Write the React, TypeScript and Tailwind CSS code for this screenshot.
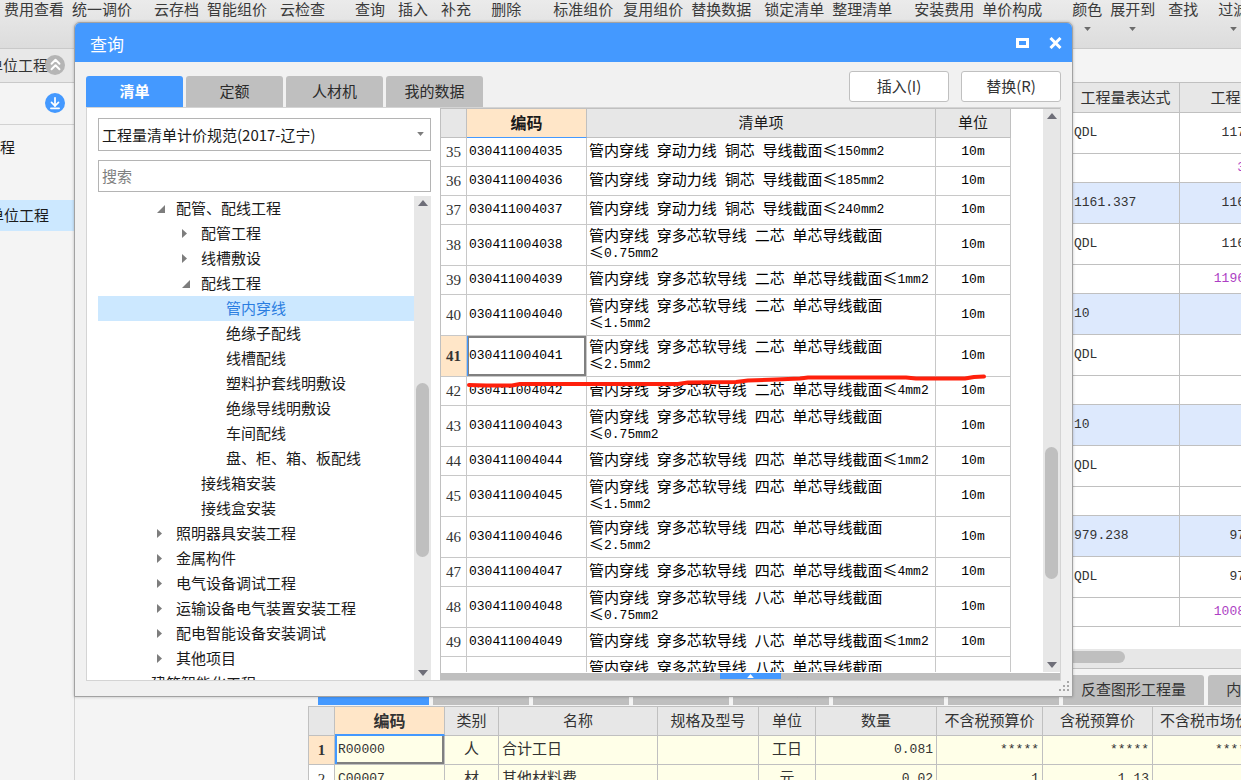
import { ChevronsUp, ArrowDownToLine } from "lucide-react";

type ToolItem = { label: string; gap: string; menu?: boolean };

type TreeNode = {
  label: string;
  level: 0 | 1 | 2 | 3;
  state?: "open" | "closed";
  active?: boolean;
};

type ListRow = { no?: number; name: string };

type QtyRow = { expr: string; qty: string; tone?: "blue" | "purple"; short?: boolean };

const TOOLBAR: ToolItem[] = [
  { label: "费用查看", gap: "ml-1" },
  { label: "统一调价", gap: "ml-2" },
  { label: "云存档", gap: "ml-[22px]" },
  { label: "智能组价", gap: "ml-2" },
  { label: "云检查", gap: "ml-[13px]" },
  { label: "查询", gap: "ml-[30px]" },
  { label: "插入", gap: "ml-[13px]" },
  { label: "补充", gap: "ml-[13px]" },
  { label: "删除", gap: "ml-[20px]" },
  { label: "标准组价", gap: "ml-[32px]" },
  { label: "复用组价", gap: "ml-[10px]" },
  { label: "替换数据", gap: "ml-2" },
  { label: "锁定清单", gap: "ml-[13px]" },
  { label: "整理清单", gap: "ml-2" },
  { label: "安装费用", gap: "ml-[22px]" },
  { label: "单价构成", gap: "ml-2" },
  { label: "颜色", gap: "ml-[30px]", menu: true },
  { label: "展开到", gap: "ml-2", menu: true },
  { label: "查找", gap: "ml-[13px]" },
  { label: "过滤", gap: "ml-[20px]", menu: true },
];

const DIALOG_TABS = ["清单", "定额", "人材机", "我的数据"];

const TREE: TreeNode[] = [
  { label: "配管、配线工程", level: 1, state: "open" },
  { label: "配管工程", level: 2, state: "closed" },
  { label: "线槽敷设", level: 2, state: "closed" },
  { label: "配线工程", level: 2, state: "open" },
  { label: "管内穿线", level: 3, active: true },
  { label: "绝缘子配线", level: 3 },
  { label: "线槽配线", level: 3 },
  { label: "塑料护套线明敷设", level: 3 },
  { label: "绝缘导线明敷设", level: 3 },
  { label: "车间配线", level: 3 },
  { label: "盘、柜、箱、板配线", level: 3 },
  { label: "接线箱安装", level: 2 },
  { label: "接线盒安装", level: 2 },
  { label: "照明器具安装工程", level: 1, state: "closed" },
  { label: "金属构件", level: 1, state: "closed" },
  { label: "电气设备调试工程", level: 1, state: "closed" },
  { label: "运输设备电气装置安装工程", level: 1, state: "closed" },
  { label: "配电智能设备安装调试", level: 1, state: "closed" },
  { label: "其他项目", level: 1, state: "closed" },
  { label: "建筑智能化工程", level: 0 },
];

const INDENT = ["pl-[28px]", "pl-[53px]", "pl-[78px]", "pl-[103px]"];

const LIST: ListRow[] = [
  { no: 35, name: "管内穿线 穿动力线 铜芯 导线截面≤150mm2" },
  { no: 36, name: "管内穿线 穿动力线 铜芯 导线截面≤185mm2" },
  { no: 37, name: "管内穿线 穿动力线 铜芯 导线截面≤240mm2" },
  { no: 38, name: "管内穿线 穿多芯软导线 二芯 单芯导线截面\n≤0.75mm2" },
  { no: 39, name: "管内穿线 穿多芯软导线 二芯 单芯导线截面≤1mm2" },
  { no: 40, name: "管内穿线 穿多芯软导线 二芯 单芯导线截面\n≤1.5mm2" },
  { no: 41, name: "管内穿线 穿多芯软导线 二芯 单芯导线截面\n≤2.5mm2" },
  { no: 42, name: "管内穿线 穿多芯软导线 二芯 单芯导线截面≤4mm2" },
  { no: 43, name: "管内穿线 穿多芯软导线 四芯 单芯导线截面\n≤0.75mm2" },
  { no: 44, name: "管内穿线 穿多芯软导线 四芯 单芯导线截面≤1mm2" },
  { no: 45, name: "管内穿线 穿多芯软导线 四芯 单芯导线截面\n≤1.5mm2" },
  { no: 46, name: "管内穿线 穿多芯软导线 四芯 单芯导线截面\n≤2.5mm2" },
  { no: 47, name: "管内穿线 穿多芯软导线 四芯 单芯导线截面≤4mm2" },
  { no: 48, name: "管内穿线 穿多芯软导线 八芯 单芯导线截面\n≤0.75mm2" },
  { no: 49, name: "管内穿线 穿多芯软导线 八芯 单芯导线截面≤1mm2" },
  { name: "管内穿线 穿多芯软导线 八芯 单芯导线截面\n≤1.5mm2" },
];

const QTY: QtyRow[] = [
  { expr: "QDL", qty: "1173.337" },
  { expr: "", qty: "351.25", tone: "purple", short: true },
  { expr: "1161.337", qty: "1161.337", tone: "blue" },
  { expr: "QDL", qty: "1161.337" },
  { expr: "", qty: "1196.1771", tone: "purple", short: true },
  { expr: "10", qty: "", tone: "blue" },
  { expr: "QDL", qty: "" },
  { expr: "", qty: "", short: true },
  { expr: "10", qty: "", tone: "blue" },
  { expr: "QDL", qty: "" },
  { expr: "", qty: "", short: true },
  { expr: "979.238", qty: "979.238", tone: "blue" },
  { expr: "QDL", qty: "979.238" },
  { expr: "", qty: "1008.6151", tone: "purple", short: true },
];

const DETAIL_TABS = [
  "工料机显示",
  "单价构成",
  "标准换算",
  "换算信息",
  "安装费用",
  "特征及内容",
  "工程量明细",
  "反查图形工程量",
  "内容指引",
];

const DETAIL_ROWS = [
  ["R00000", "人", "合计工日", "", "工日", "0.081", "*****", "*****", "*****"],
  ["C00007", "材", "其他材料费", "", "元", "0.02", "1", "1.13", "1"],
];

const DETAIL_HEADS = ["编码", "类别", "名称", "规格及型号", "单位", "数量", "不含税预算价", "含税预算价", "不含税市场价"];

// Latin runs are set in the smaller mono face, Chinese runs keep the 15px face.
function Mixed({ text }: { text: string }) {
  return (
    <>
      {text.split(/([\x20-\x7e]+)/).map((part, i) =>
        i % 2 ? (
          <span key={i} className="align-[1px] font-['Liberation_Mono',monospace] text-[13px] leading-none whitespace-pre">
            {part}
          </span>
        ) : (
          part
        )
      )}
    </>
  );
}

function Triangle({ dir, className }: { dir: "up" | "down"; className: string }) {
  return (
    <svg viewBox="0 0 10 6" className={className} aria-hidden="true">
      <path d={dir === "up" ? "M5 0L10 6H0Z" : "M5 6L0 0H10Z"} fill="currentColor" />
    </svg>
  );
}

function TreeMarker({ state }: { state?: "open" | "closed" }) {
  return (
    <span className="flex w-[25px] shrink-0 items-center pl-[6px] text-[#7d7d7d]">
      {state === "open" && (
        <svg viewBox="0 0 8 8" className="size-2" aria-hidden="true">
          <path d="M8 0V8H0Z" fill="currentColor" />
        </svg>
      )}
      {state === "closed" && (
        <svg viewBox="0 0 5 9" className="h-[9px] w-[5px]" aria-hidden="true">
          <path d="M0 0L5 4.5L0 9Z" fill="currentColor" />
        </svg>
      )}
    </span>
  );
}

function ScrollBar({ before, thumb }: { before: string; thumb: string }) {
  return (
    <div className="flex w-[17px] shrink-0 flex-col items-center bg-[#e7e7e7] py-1 text-[#6e6e78]">
      <Triangle dir="up" className="h-[6px] w-[10px] shrink-0" />
      <div className={before} />
      <div className={`w-[13px] shrink-0 rounded-full bg-[#bfbfbf] ${thumb}`} />
      <div className="flex-1" />
      <Triangle dir="down" className="h-[6px] w-[10px] shrink-0" />
    </div>
  );
}

function Toolbar() {
  return (
    <nav className="flex h-[49px] shrink-0 border-b border-[#c9c9c9] bg-gradient-to-b from-[#ebebeb] to-[#dcdcdc]">
      {TOOLBAR.map((t) => (
        <button key={t.label} className={`flex shrink-0 flex-col items-center text-[#3a3a3a] ${t.gap}`}>
          <span className="leading-[18px]">{t.label}</span>
          {t.menu && <Triangle dir="down" className="mt-[9px] h-1 w-[7px] text-[#6b6b6b]" />}
        </button>
      ))}
    </nav>
  );
}

function Sidebar() {
  return (
    <aside className="flex w-[75px] shrink-0 flex-col border-r border-[#d2d2d2] bg-[#f4f4f4]">
      <div className="flex h-[34px] items-center justify-end border-b border-[#c9c9c9] bg-[#e8e8e8] pr-[9px] pb-[2px]">
        <span className="shrink-0 text-[#333]">单位工程</span>
        <button aria-label="收起" className="-ml-[3px] flex size-5 shrink-0 items-center justify-center rounded-full bg-[#b5b5b5] text-white">
          <ChevronsUp size={19} strokeWidth={2.5} />
        </button>
      </div>
      <div className="flex h-[42px] items-center justify-end border-b border-[#d2d2d2] pr-[9px] pb-[2px]">
        <button aria-label="下载" className="flex size-5 items-center justify-center rounded-full bg-[#4499ff] text-white">
          <ArrowDownToLine size={14} strokeWidth={3} />
        </button>
      </div>
      <div className="flex h-[45px] items-center pb-[2px]">程</div>
      <div className="h-[30px]" />
      <div className="flex h-[31px] items-center justify-end bg-[#cce8ff] pr-[25px] pb-[2px]">
        <span className="shrink-0">单位工程</span>
      </div>
    </aside>
  );
}

function QuantityTable() {
  return (
    <div className="overflow-hidden">
      <table className="w-[979px] table-fixed border-separate border-spacing-0">
        <colgroup>
          <col />
          <col className="w-[108px]" />
          <col className="w-[107px]" />
        </colgroup>
        <thead>
          <tr className="h-[30px] bg-[#e7e7e7] text-[#333]">
            <th className="border-r border-b border-[#c0c0c0]" />
            <th className="border-r border-b border-[#c0c0c0] pb-[2px] font-normal">工程量表达式</th>
            <th className="border-r border-b border-[#c0c0c0] pb-[2px] font-normal">工程量</th>
          </tr>
        </thead>
        <tbody className="text-[#333]">
          {QTY.map((r, i) => (
            <tr key={i} className={`${r.short ? "h-[29px]" : "h-[41px]"} ${r.tone === "blue" ? "bg-[#dde9fd]" : "bg-white"}`}>
              <td className="border-r border-b border-[#c0c0c0]" />
              <td className="border-r border-b border-[#c0c0c0] pb-1 pl-[2px]">
                <Mixed text={r.expr} />
              </td>
              <td className={`border-r border-b border-[#c0c0c0] pr-[2px] pb-1 text-right ${r.tone === "purple" ? "text-[#ad3fc4]" : ""}`}>
                <Mixed text={r.qty} />
              </td>
            </tr>
          ))}
        </tbody>
      </table>
    </div>
  );
}

function DetailPanel() {
  return (
    <section className="flex h-[112px] shrink-0 flex-col overflow-hidden border-t border-[#c0c0c0] bg-[#f4f4f4]">
      <div className="flex gap-1 pt-[6px] pl-[10px]">
        {DETAIL_TABS.map((t, i) => (
          <button
            key={t}
            className={`h-[30px] shrink-0 rounded-t-[3px] px-[18px] pb-[2px] ${
              i === 0 ? "bg-[#4499ff] text-white" : "bg-[#bfbfbf] text-[#333]"
            }`}
          >
            {t}
          </button>
        ))}
      </div>
      <table className="mt-px w-[950px] table-fixed border-separate border-spacing-0 border-t border-l border-[#c0c0c0]">
        <colgroup>
          <col className="w-[26px]" />
          <col className="w-[110px]" />
          <col className="w-[54px]" />
          <col className="w-[159px]" />
          <col className="w-[101px]" />
          <col className="w-[57px]" />
          <col className="w-[121px]" />
          <col className="w-[106px]" />
          <col className="w-[110px]" />
          <col className="w-[105px]" />
        </colgroup>
        <thead>
          <tr className="h-[29px] bg-[#e7e7e7] text-[#333]">
            <th className="border-r border-b border-[#c0c0c0]" />
            {DETAIL_HEADS.map((h, i) => (
              <th
                key={h}
                className={`border-r pb-[2px] whitespace-nowrap ${
                  i === 0
                    ? "border-b-2 border-r-[#c0c0c0] border-b-[#4499ff] bg-[#ffe6c8] text-base leading-5 font-bold"
                    : "border-b border-[#c0c0c0] font-normal"
                }`}
              >
                {h}
              </th>
            ))}
          </tr>
        </thead>
        <tbody className="text-[#333]">
          {DETAIL_ROWS.map((row, r) => (
            <tr key={row[0]} className="h-[29px] bg-[#ffffe8]">
              <th
                className={`border-r border-b border-[#c0c0c0] font-['Liberation_Serif',serif] ${
                  r === 0 ? "bg-[#ffe6c8] font-bold" : "bg-white font-normal"
                }`}
              >
                {r + 1}
              </th>
              {row.map((v, i) => (
                <td
                  key={i}
                  className={`border-r border-b border-[#c0c0c0] px-[3px] pb-1 ${
                    i > 4 ? "text-right" : i === 1 || i === 4 ? "text-center" : ""
                  } ${r === 0 && i === 0 ? "shadow-[inset_2px_0_0_#4499ff,inset_-2px_-2px_0_#808080]" : ""}`}
                >
                  <Mixed text={v} />
                </td>
              ))}
            </tr>
          ))}
        </tbody>
      </table>
    </section>
  );
}

function TreePane() {
  return (
    <div className="flex w-[353px] shrink-0 flex-col bg-white pt-[10px] pr-[9px] pl-[11px]">
      <div className="relative">
        <select
          aria-label="清单规范"
          className="h-[33px] w-full appearance-none rounded-none border border-[#b4b4b4] bg-white pl-[3px] text-[#1a1a1a] outline-none"
        >
          <option>工程量清单计价规范(2017-辽宁)</option>
        </select>
        <Triangle dir="down" className="pointer-events-none absolute top-[14px] right-[7px] h-1 w-[7px] text-[#7d7d7d]" />
      </div>
      <input
        aria-label="搜索"
        placeholder="搜索"
        className="mt-[9px] h-8 w-full border border-[#b4b4b4] bg-white pb-[2px] pl-[3px] outline-none placeholder:text-[#808080]"
      />
      <div className="mt-1 flex min-h-0 flex-1">
        <ul className="min-w-0 flex-1 overflow-hidden">
          {TREE.map((n) => (
            <li
              key={n.label}
              className={`flex h-[25px] items-center ${INDENT[n.level]} ${n.active ? "bg-[#cce8ff] text-[#2a7de1]" : "text-[#1a1a1a]"}`}
            >
              <TreeMarker state={n.state} />
              <span className="pb-[2px] whitespace-nowrap">{n.label}</span>
            </li>
          ))}
        </ul>
        <ScrollBar before="h-[177px] shrink-0" thumb="h-[174px]" />
      </div>
    </div>
  );
}

function ListPane() {
  return (
    <div className="flex min-w-0 flex-1 flex-col border-t border-l border-[#c0c0c0] bg-white">
      <div className="flex min-h-0 flex-1">
        <div className="mr-8 min-w-0 flex-1 overflow-hidden">
          <table className="w-full table-fixed border-separate border-spacing-0">
            <colgroup>
              <col className="w-[26px]" />
              <col className="w-[120px]" />
              <col />
              <col className="w-[75px]" />
            </colgroup>
            <thead>
              <tr className="h-[29px] bg-[#e7e7e7] text-[#1a1a1a]">
                <th className="border-r border-b border-[#c0c0c0]" />
                <th className="border-r border-b border-r-[#c0c0c0] border-b-[#4499ff] bg-[#ffe6c8] pb-[2px] text-base leading-5 font-bold">
                  编码
                </th>
                <th className="border-r border-b border-[#c0c0c0] pb-[2px] font-normal">清单项</th>
                <th className="border-r border-b border-[#c0c0c0] pb-[2px] font-normal">单位</th>
              </tr>
            </thead>
            <tbody className="text-black">
              {LIST.map((r, i) => {
                const active = r.no === 41;
                return (
                  <tr key={i} className={`leading-[17px] ${r.name.includes("\n") ? "h-[41px]" : "h-[29px]"}`}>
                    <th
                      className={`border-r border-b border-[#c8c8c8] font-['Liberation_Serif',serif] text-[#333] ${
                        active ? "bg-[#ffe6c8] font-bold" : "font-normal"
                      }`}
                    >
                      {r.no}
                    </th>
                    <td
                      className={`border-r border-b border-[#c8c8c8] pb-[5px] pl-[2px] ${
                        active ? "shadow-[inset_1px_0_0_#4499ff,inset_0_0_0_2px_#808080]" : ""
                      }`}
                    >
                      {r.no && <Mixed text={`0304110040${r.no}`} />}
                    </td>
                    <td className="border-r border-b border-[#c8c8c8] pb-[5px] pl-[2px] whitespace-pre">
                      <Mixed text={r.name} />
                    </td>
                    <td className="border-r border-b border-[#c8c8c8] pb-[5px] text-center">{r.no && <Mixed text="10m" />}</td>
                  </tr>
                );
              })}
            </tbody>
          </table>
        </div>
        <ScrollBar before="h-[328px] shrink-0" thumb="h-[132px]" />
      </div>
      <div className="mt-px flex h-[7px] shrink-0 justify-center bg-[#bfbfbf]">
        <button aria-label="展开" className="flex h-[6px] w-[61px] items-center justify-center bg-[#4499ff] text-white">
          <Triangle dir="up" className="h-1 w-[7px]" />
        </button>
      </div>
    </div>
  );
}

function QueryDialog() {
  return (
    <div
      role="dialog"
      aria-label="查询"
      className="absolute top-[22px] right-[168px] bottom-[83px] left-[74px] flex flex-col rounded-t-md border border-[#a2a2a2] bg-[#f1f1f1] shadow-[0_0_3px_rgba(0,0,0,0.25)]"
    >
      <header className="flex h-[39px] shrink-0 items-center rounded-t-[5px] bg-[#4499ff] pr-[10px] pl-[15px] text-white">
        <h1 className="mt-[2px] flex-1 text-[17px]">查询</h1>
        <button aria-label="最大化">
          <svg viewBox="0 0 13 10" className="h-[10px] w-[13px]" fill="none" stroke="currentColor" strokeWidth="3">
            <path d="M1.5 1.5H11.5V8.5H1.5Z" />
          </svg>
        </button>
        <button aria-label="关闭" className="ml-5">
          <svg viewBox="0 0 13 12" className="h-3 w-[13px]" fill="none" stroke="currentColor" strokeWidth="3">
            <path d="M1.5 1L11.5 11M11.5 1L1.5 11" />
          </svg>
        </button>
      </header>

      <div className="flex h-[45px] shrink-0 px-[11px]">
        <div role="tablist" className="flex flex-1 items-end gap-[3px]">
          {DIALOG_TABS.map((t, i) => (
            <button
              key={t}
              role="tab"
              aria-selected={i === 0}
              className={`h-[31px] w-[97px] rounded-t-[3px] pb-[2px] ${
                i === 0 ? "bg-[#4499ff] font-bold text-white" : "bg-[#bfbfbf] text-[#2b2b2b]"
              }`}
            >
              {t}
            </button>
          ))}
        </div>
        <div className="flex gap-3 pt-[9px]">
          <button className="h-[31px] w-[100px] rounded-[3px] border border-[#c0c0c0] bg-white pb-[2px] text-[#333]">插入(I)</button>
          <button className="h-[31px] w-[100px] rounded-[3px] border border-[#c0c0c0] bg-white pb-[2px] text-[#333]">替换(R)</button>
        </div>
      </div>

      <div className="mx-[11px] mb-[15px] flex min-h-0 flex-1 border border-[#d4d4d4]">
        <TreePane />
        <ListPane />
      </div>

      <svg viewBox="0 0 10 10" className="absolute right-[3px] bottom-[5px] size-[10px] text-[#a8a8a8]" fill="currentColor" aria-hidden="true">
        <path d="M8 0h2v2h-2zM4 4h2v2h-2zM8 4h2v2h-2zM0 8h2v2h-2zM4 8h2v2h-2zM8 8h2v2h-2z" />
      </svg>

      {/* hand-drawn marker under row 41 */}
      <svg
        viewBox="0 0 522 18"
        className="pointer-events-none absolute top-[350px] left-[391px] h-[18px] w-[522px]"
        fill="none"
        stroke="#ff200c"
        strokeWidth="4"
        strokeLinecap="round"
        strokeLinejoin="round"
        aria-hidden="true"
      >
        <path d="M3 12L20 12.500L46 12.500L54 11L212 11L222 9.500L270 9L282 7.500L310 6.500L334 5.500L342 4.500L440 4.500L450 5.500L499 5.500L508 4L518 3.500" />
      </svg>
    </div>
  );
}

export default function App() {
  return (
    <div className="relative flex h-screen flex-col overflow-hidden bg-[#f4f4f4] font-['Noto_Sans_CJK_SC',sans-serif] text-[15px] leading-5 text-[#1a1a1a]">
      <Toolbar />
      <div className="flex min-h-0 flex-1">
        <Sidebar />
        <div className="w-[233px] shrink-0" />
        <main className="flex min-w-0 flex-1 flex-col">
          <div className="h-[34px] shrink-0 border-b border-[#c0c0c0] bg-[#f4f4f4]" />
          <QuantityTable />
          <div className="flex-1 bg-white" />
          <div className="h-[19px] shrink-0 bg-[#e7e7e7] pt-[2px]">
            <div className="h-3 w-[817px] rounded-full bg-[#bfbfbf]" />
          </div>
          <DetailPanel />
        </main>
      </div>
      <QueryDialog />
    </div>
  );
}
